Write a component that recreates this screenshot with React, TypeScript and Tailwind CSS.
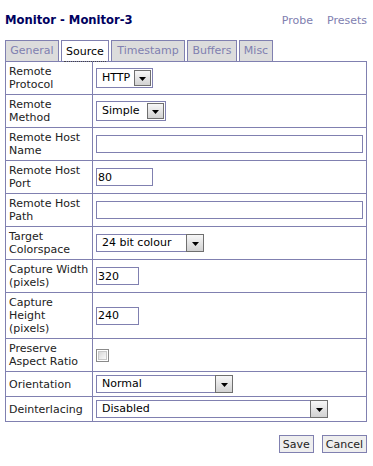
import type { ReactNode } from 'react'

const FONT = { fontFamily: '"DejaVu Sans", Verdana, sans-serif' }

function Arrow() {
  return (
    <svg width="7" height="4" viewBox="0 0 7 4" className="mt-[2px]">
      <path d="M0 0h7L3.5 4z" fill="#000" />
    </svg>
  )
}

function ArrowButton({ className }: { className: string }) {
  return (
    <div
      className={`${className} flex items-center justify-center border border-[#6f6f6f] bg-gradient-to-b from-[#f7f7f7] to-[#d2d2d2]`}
    >
      <Arrow />
    </div>
  )
}

function Select({ value, width, tall }: { value: string; width: string; tall?: boolean }) {
  if (tall) {
    // narrow selects: the button sits inside the purple frame
    return (
      <div className={`${width} flex h-[20px] border border-[#8080b0] bg-white p-[1px] pl-0`}>
        <div className="flex flex-1 items-center pl-[5px] text-[11px] text-black">{value}</div>
        <ArrowButton className="w-[17px] h-full" />
      </div>
    )
  }
  return (
    <div className={`${width} flex h-[18px]`}>
      <div className="flex flex-1 items-center border border-r-0 border-[#8080b0] bg-white pl-[5px] text-[11px] text-black">
        {value}
      </div>
      <ArrowButton className="w-[18px] h-full" />
    </div>
  )
}

function TextInput({ value = '', width }: { value?: string; width: string }) {
  return (
    <input
      readOnly
      defaultValue={value}
      style={FONT}
      className={`${width} block h-[18px] border border-[#8080b0] bg-white px-[1px] text-[11px] text-black outline-none`}
    />
  )
}

function Checkbox() {
  return (
    <div className="h-[13px] w-[13px] border border-[#8a8a8a] bg-white p-[1px]">
      <div className="h-full w-full border border-[#c8c8c8] bg-gradient-to-br from-[#d8d8d8] to-[#fafafa]" />
    </div>
  )
}

const rows: { label: string[]; field: ReactNode }[] = [
  { label: ['Remote', 'Protocol'], field: <Select value="HTTP" width="w-[57px]" tall /> },
  { label: ['Remote', 'Method'], field: <Select value="Simple" width="w-[70px]" tall /> },
  { label: ['Remote Host', 'Name'], field: <TextInput width="w-full" /> },
  { label: ['Remote Host', 'Port'], field: <TextInput value="80" width="w-[57px]" /> },
  { label: ['Remote Host', 'Path'], field: <TextInput width="w-full" /> },
  { label: ['Target', 'Colorspace'], field: <Select value="24 bit colour" width="w-[108px]" /> },
  { label: ['Capture Width', '(pixels)'], field: <TextInput value="320" width="w-[43px]" /> },
  { label: ['Capture', 'Height', '(pixels)'], field: <TextInput value="240" width="w-[43px]" /> },
  { label: ['Preserve', 'Aspect Ratio'], field: <Checkbox /> },
  { label: ['Orientation'], field: <Select value="Normal" width="w-[137px]" /> },
  { label: ['Deinterlacing'], field: <Select value="Disabled" width="w-[232px]" /> },
]

const tabs = [
  { name: 'General', w: 'w-[54px]' },
  { name: 'Source', w: 'w-[48px]', active: true },
  { name: 'Timestamp', w: 'w-[74px]' },
  { name: 'Buffers', w: 'w-[50px]' },
  { name: 'Misc', w: 'w-[34px]' },
]

export default function App() {
  return (
    <div style={FONT} className="min-h-[466px] w-[373px] bg-white pl-[5px] pr-[6px] pt-[12px] text-[11px]">
      {/* Header */}
      <div className="flex items-baseline justify-between leading-[16px]">
        <h1 className="text-[11.6px] font-bold text-[#000060]">Monitor - Monitor-3</h1>
        <div className="flex gap-[14px] text-[11px] text-[#8080b0]">
          <a>Probe</a>
          <a>Presets</a>
        </div>
      </div>

      {/* Tabs */}
      <div className="mt-[11px] flex gap-[2px]">
        {tabs.map((t) => (
          <div
            key={t.name}
            className={`${t.w} flex h-[21px] items-center justify-center border border-b-0 border-[#8080b0] ${
              t.active ? 'bg-white text-black' : 'bg-[#dcdcdc] text-[#8080b0]'
            }`}
          >
            <span className={t.active ? 'border-b border-dotted border-[#444] px-[2px] leading-[18px] mt-[3px]' : ''}>
              {t.name}
            </span>
          </div>
        ))}
      </div>

      {/* Form */}
      <table className="w-[362px] table-fixed border-collapse border border-[#8080b0]">
        <colgroup>
          <col className="w-[87px]" />
          <col />
        </colgroup>
        <tbody>
          {rows.map((r) => (
            <tr key={r.label.join(' ')}>
              <td className="border border-[#8080b0] p-[3px] align-middle text-[#222] leading-[13px]">
                {r.label.map((l) => (
                  <div key={l} className="whitespace-nowrap">
                    {l}
                  </div>
                ))}
              </td>
              <td className="border border-[#8080b0] p-[3px] align-middle">
                <div className="flex items-center">{r.field}</div>
              </td>
            </tr>
          ))}
        </tbody>
      </table>

      {/* Buttons */}
      <div className="mt-[13px] flex justify-end gap-[8px]">
        <button style={FONT} className="h-[18px] border border-[#8080b0] bg-[#eeeeee] px-[3px] text-[11px] leading-none text-[#222]">
          Save
        </button>
        <button style={FONT} className="h-[18px] border border-[#8080b0] bg-[#eeeeee] px-[3px] text-[11px] leading-none text-[#222]">
          Cancel
        </button>
      </div>
    </div>
  )
}
